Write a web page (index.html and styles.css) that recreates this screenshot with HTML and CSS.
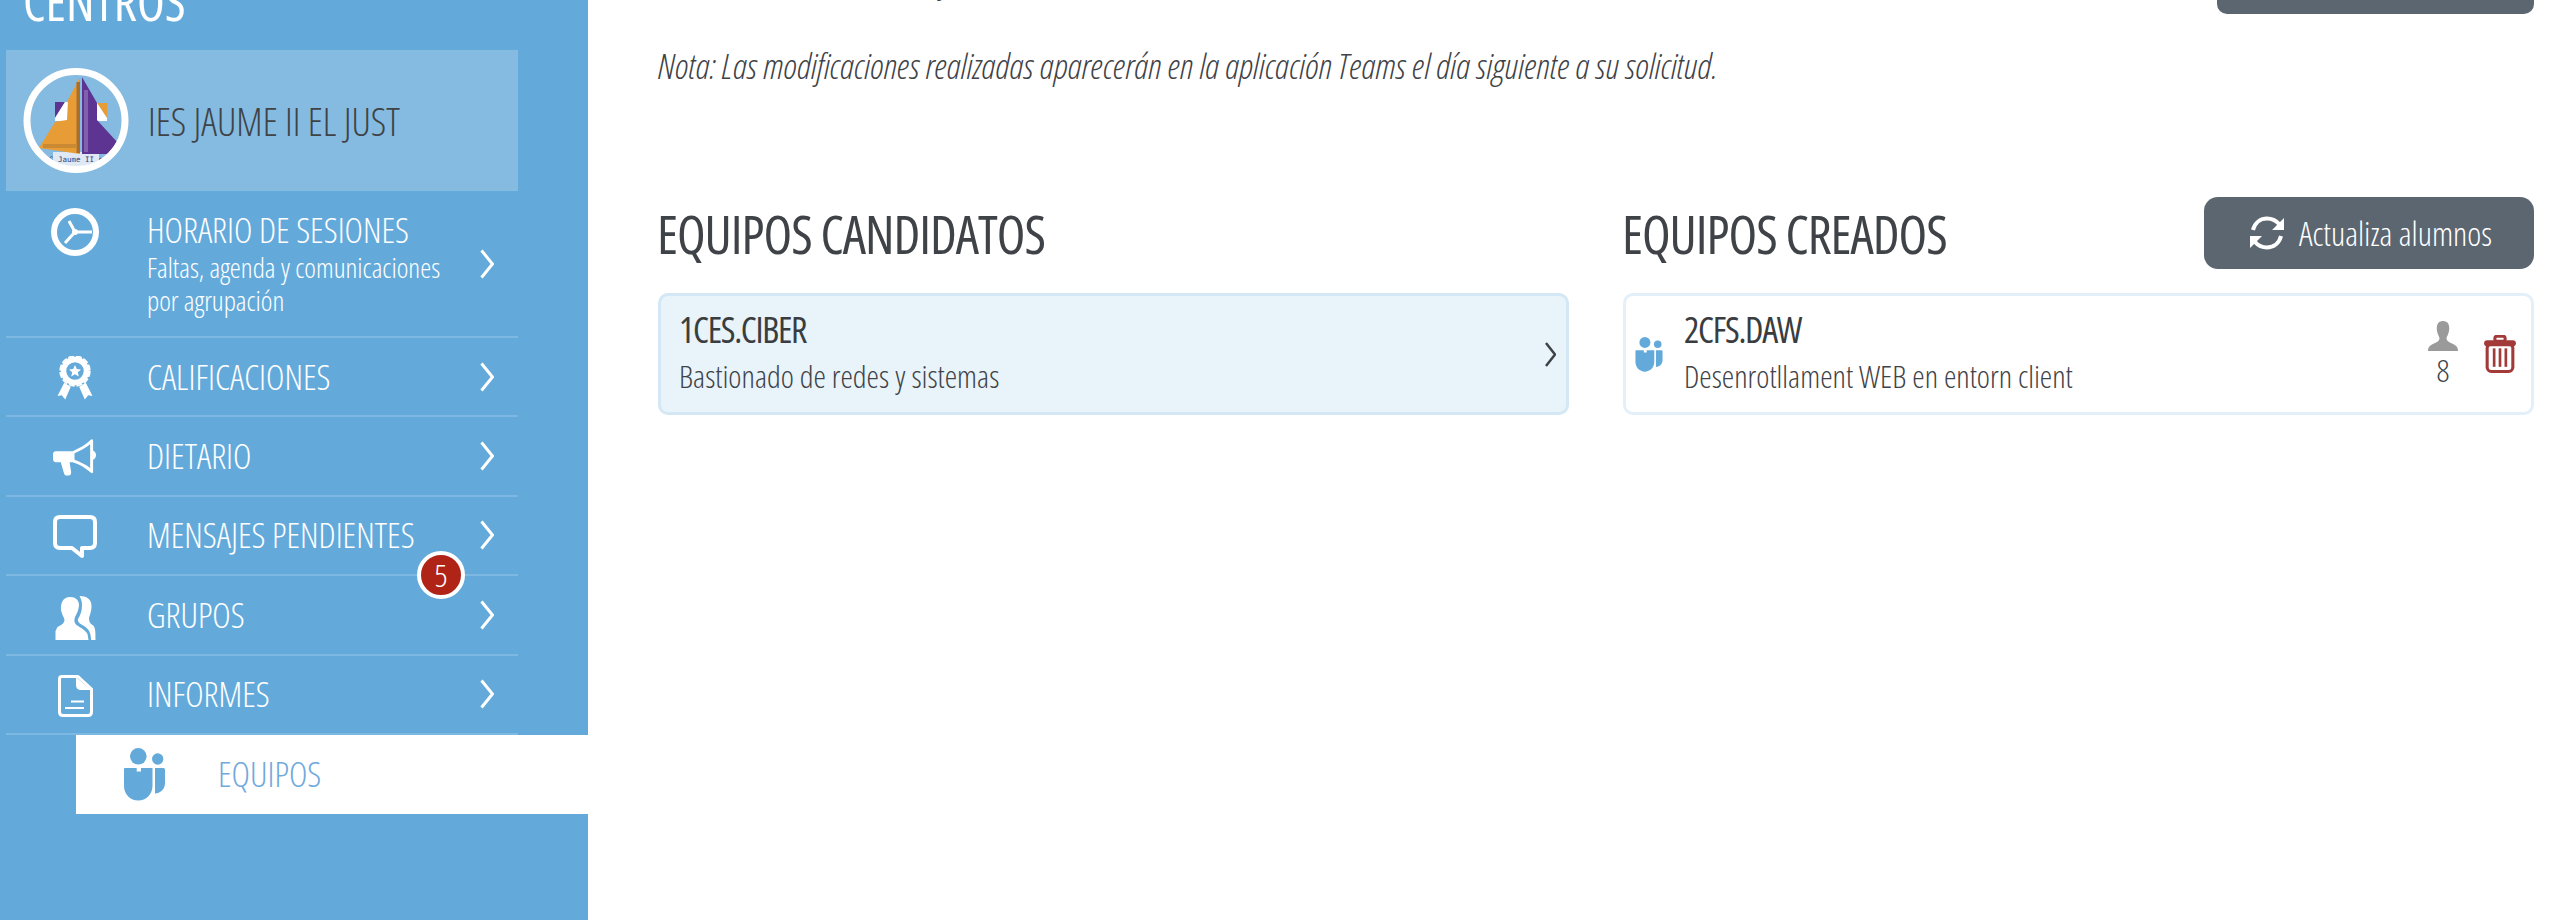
FILE: index.html
```html
<!DOCTYPE html>
<html lang="es">
<head>
<meta charset="utf-8">
<title>Equipos</title>
<link rel="stylesheet" href="styles.css">
</head>
<body>
<div class="page">
  <aside class="sidebar">
    <h2 class="side-title">CENTROS</h2>
    <div class="school">
      <svg class="logo" viewBox="0 0 106 106">
        <defs><clipPath id="lc"><circle cx="53" cy="52.500" r="46"/></clipPath></defs>
        <g clip-path="url(#lc)">
          <rect x="30" y="84" width="46" height="16" fill="#dfe9f5"/>
          <polygon points="32,34 42,34 32,50" fill="#5e3492"/>
          <polygon points="42,34 32,50 32,53 45,53 45,34" fill="#fff"/>
          <polygon points="74,35 84,35 84,50" fill="#e89c35"/>
          <polygon points="74,35 84,50 84,53 74,53" fill="#fff"/>
          <polygon points="57,9 57,86 16,80 32,54 37,53 44,52 45,32" fill="#e89c35"/>
          <rect x="53.500" y="14" width="3.500" height="71" fill="#a96f2c"/>
          <rect x="20" y="76" width="34" height="4" fill="#c98a33"/>
          <polygon points="59,9 59,86 95,86 95,75 74,52 74,35" fill="#5e3492"/>
          <rect x="61" y="22" width="4" height="62" fill="#8160ad"/>
          <text class="logo-text" x="53" y="94" text-anchor="middle">S Jaume II e</text>
        </g>
        <circle cx="53" cy="52.500" r="49" fill="none" stroke="#fff" stroke-width="7"/>
      </svg>
      <span class="school-name">IES JAUME II EL JUST</span>
    </div>
    <nav class="nav">
      <a class="nav-item nav-item-tall">
        <span class="nav-icon nav-icon-top">
          <svg width="48" height="48" viewBox="0 0 48 48"><circle cx="24" cy="24" r="21" fill="none" stroke="#fff" stroke-width="6"/><path d="M24 24 L41 24 M24 24 L18 13 M24 24 L14 35" fill="none" stroke="#fff" stroke-width="3"/><circle cx="24" cy="24" r="3" fill="#fff"/></svg>
        </span>
        <span class="nav-text">
          <span class="nav-label">HORARIO DE SESIONES</span>
          <span class="nav-sub">Faltas, agenda y comunicaciones<br>por agrupación</span>
        </span>
        <svg class="chev" viewBox="0 0 14 30"><path d="M1.500 1.500 L12.500 15 L1.500 28.500"/></svg>
      </a>
      <a class="nav-item">
        <span class="nav-icon">
          <svg width="36" height="44" viewBox="0 0 35 44"><path fill="#fff" d="M6.700 26.700 L0 40 L4.300 39.300 L7.700 43.500 L13.300 30.700 Z M28.300 26.700 L35 40 L30.700 39.300 L27.300 43.500 L21.700 30.700 Z"/><circle cx="17.500" cy="15" r="11.500" fill="none" stroke="#fff" stroke-width="5.500"/><circle cx="17.500" cy="15" r="14.800" fill="none" stroke="#fff" stroke-width="1.800" stroke-dasharray="6 1.800"/><polygon fill="#fff" points="17.500,9 19.300,13 23.500,13.400 20.300,16.200 21.300,20.500 17.500,18.200 13.700,20.500 14.700,16.200 11.500,13.400 15.700,13"/></svg>
        </span>
        <span class="nav-text"><span class="nav-label">CALIFICACIONES</span></span>
        <svg class="chev" viewBox="0 0 14 30"><path d="M1.500 1.500 L12.500 15 L1.500 28.500"/></svg>
      </a>
      <a class="nav-item">
        <span class="nav-icon">
          <svg width="44" height="37" viewBox="0 0 45 32" preserveAspectRatio="none"><path fill="#fff" fill-rule="evenodd" d="M3 10.500 L20 10.500 C27 8 34 5 39 0.500 Q41 -0.500 41 2 L41 10 C45 12 45 16 41 18 L41 28 Q41 30.500 38.500 29 C33 25 27 21.500 20 20 L17 20 L18.500 28 Q19 31.500 16 31.500 L13 31.500 Q11.500 31 11 29 L8 20 L3 20 Q0 20 0 17 L0 13 Q0 10.500 3 10.500 Z M22 12.300 L22 18 C27 19.500 33 22 38 25 L38 4.500 C33 8 27 10.500 22 12.300 Z"/></svg>
        </span>
        <span class="nav-text"><span class="nav-label">DIETARIO</span></span>
        <svg class="chev" viewBox="0 0 14 30"><path d="M1.500 1.500 L12.500 15 L1.500 28.500"/></svg>
      </a>
      <a class="nav-item">
        <span class="nav-icon">
          <svg width="44" height="44" viewBox="0 0 44 44"><path fill="none" stroke="#fff" stroke-width="4" stroke-linejoin="round" d="M7 2 L37 2 Q42 2 42 7 L42 28 Q42 33 37 33 L29 33 L29 41 L19 33 L7 33 Q2 33 2 28 L2 7 Q2 2 7 2 Z"/></svg>
        </span>
        <span class="nav-text"><span class="nav-label">MENSAJES PENDIENTES</span></span>
        <svg class="chev" viewBox="0 0 14 30"><path d="M1.500 1.500 L12.500 15 L1.500 28.500"/></svg>
        <span class="badge">5</span>
      </a>
      <a class="nav-item">
        <span class="nav-icon nav-icon-low">
          <svg width="41" height="44" viewBox="0 0 40 44"><path fill="#fff" d="M14.500 1 C7 1 5 8 5.500 14 C6 18 8.500 21 9 24 C9 27 6 29 2 31 L0 35 L0 44 L33 44 L32 38 C30 34 24 31 21 29 C18.500 27 18.500 24 19.500 21 C22 17 23.500 12 23.500 9 C23.500 4 20 1 14.500 1 Z"/><path fill="#fff" d="M24 0 C31 0 36 3 36 10 C36 15 34.500 18 33.500 22 C33.500 26 35 28 37 29 C40 31 40 35 40 44 L35.500 44 C35.500 38 34 34 30 31 C26 28 21.500 27 22.500 23 C25 19 26.500 15 26.500 9 C26.500 5 25.500 3 24 0 Z"/></svg>
        </span>
        <span class="nav-text"><span class="nav-label">GRUPOS</span></span>
        <svg class="chev" viewBox="0 0 14 30"><path d="M1.500 1.500 L12.500 15 L1.500 28.500"/></svg>
      </a>
      <a class="nav-item">
        <span class="nav-icon">
          <svg width="35" height="42" viewBox="0 0 35 42"><path fill="none" stroke="#fff" stroke-width="3" stroke-linejoin="round" d="M4 1.500 L20 1.500 L33.500 14 L33.500 37 Q33.500 40.500 30 40.500 L5 40.500 Q1.500 40.500 1.500 37 L1.500 4 Q1.500 1.500 4 1.500 Z"/><path fill="#fff" d="M18 2 L18 10 Q18 15 23 15 L33 15 Z M13 25.500 L26 25.500 L26 27.500 L13 27.500 Z M7 32 L26 32 L26 34 L7 34 Z"/></svg>
        </span>
        <span class="nav-text"><span class="nav-label">INFORMES</span></span>
        <svg class="chev" viewBox="0 0 14 30"><path d="M1.500 1.500 L12.500 15 L1.500 28.500"/></svg>
      </a>
      <a class="nav-active">
        <svg class="teams-icon" width="41" height="53" viewBox="0 0 41 53"><use href="#teams"/></svg>
        <span class="nav-label nav-label-active">EQUIPOS</span>
      </a>
    </nav>
  </aside>

  <main class="main">
    <div class="top-row">
      <span class="clipped-y">y</span>
      <div class="top-button"></div>
    </div>
    <p class="note">Nota: Las modificaciones realizadas aparecerán en la aplicación Teams el día siguiente a su solicitud.</p>
    <div class="columns">
      <section>
        <div class="col-head"><h2 class="col-title">EQUIPOS CANDIDATOS</h2></div>
        <div class="card card-candidate">
          <div class="card-text">
            <div class="card-title">1CES.CIBER</div>
            <div class="card-sub">Bastionado de redes y sistemas</div>
          </div>
          <svg class="card-chev" viewBox="0 0 11 25"><path d="M1 1 L10 12.500 L1 24"/></svg>
        </div>
      </section>
      <section>
        <div class="col-head">
          <h2 class="col-title">EQUIPOS CREADOS</h2>
          <button class="btn">
            <svg width="36" height="36" viewBox="0 0 36 36"><path fill="none" stroke="#fff" stroke-width="4" d="M4 15 C6 7 12 3.500 18 3.500 C23 3.500 27 5.500 30 9 M32 21 C30 29 24 32.500 18 32.500 C13 32.500 9 30.500 6 27"/><path fill="#fff" d="M35 3 L35 15 L23 15 Z M1 33 L1 21 L13 21 Z"/></svg>
            <span>Actualiza alumnos</span>
          </button>
        </div>
        <div class="card card-created">
          <svg class="card-teams" width="28" height="35" viewBox="0 0 41 53"><use href="#teams"/></svg>
          <div class="card-text">
            <div class="card-title">2CFS.DAW</div>
            <div class="card-sub">Desenrotllament WEB en entorn client</div>
          </div>
          <div class="card-count">
            <svg width="30" height="30" viewBox="0 0 30 30"><path fill="#9a9a9a" d="M15 0 C10 0 8 4 9 10 C9.500 13 11 15 11.500 17 C11.500 20 9 21 5 23 C2 24.500 0 26 0 30 L30 30 C30 26 28 24.500 25 23 C21 21 18.500 20 18.500 17 C19 15 20.500 13 21 10 C22 4 20 0 15 0 Z"/></svg>
            <span class="count-num">8</span>
          </div>
          <svg class="trash" width="32" height="38" viewBox="0 0 31 37"><rect class="trash-line" x="3" y="9" width="25" height="26.500" rx="4"/><rect class="trash-line" x="10.500" y="1.200" width="10" height="5"  rx="2"/><rect class="trash-fill" x="0" y="5" width="31" height="6" rx="3"/><rect class="trash-fill" x="8.500" y="13" width="2.600" height="18"/><rect class="trash-fill" x="14.200" y="13" width="2.600" height="18"/><rect class="trash-fill" x="19.900" y="13" width="2.600" height="18"/></svg>
        </div>
      </section>
    </div>
  </main>
</div>
<svg class="defs" width="0" height="0"><defs><g id="teams" fill="#63aadb"><circle cx="14.300" cy="8.300" r="8.300"/><circle cx="33.700" cy="11" r="5.700"/><path d="M0 21 Q0 20 1 20 L12.700 20 L12.700 23.500 L17 23.500 L17 20 L28.500 20 L28.500 38 C28.500 46.500 22 52.500 14.250 52.500 C6.500 52.500 0 46.500 0 38 Z"/><path d="M31 20 L39.500 20 Q41 20 41 21.500 L41 35 C41 41 37 45 31 45.500 Z"/></g></defs></svg>
</body>
</html>
```
FILE: styles.css
```css
* { box-sizing: border-box; }
html, body { margin: 0; height: 920px; overflow: hidden; background: #fff; }
body, button {
  font-family: "Open Sans", "Liberation Sans", sans-serif;
  font-stretch: 75%;
  font-weight: 300;
}
.defs { position: absolute; left: 0; top: 0; }
.page { display: flex; height: 920px; overflow: hidden; }

.sidebar {
  width: 588px; flex: none; height: 920px;
  background: #63aadb; padding-left: 6px;
  overflow: hidden;
}
.side-title {
  margin: -28px 0 0 17px; height: 78px;
  font-size: 51px; line-height: 58px; font-weight: 400; color: #fff;
}
.school {
  width: 512px; height: 141px; background: #85bbe1;
  display: flex; align-items: center; padding-left: 17px;
}
.logo { width: 106px; height: 106px; flex: none; }
.logo-text { font-family: "DejaVu Sans Mono", monospace; font-size: 7.500px; fill: #3a3a70; font-stretch: normal; font-weight: 400; }
.school-name { margin-left: 19px; font-size: 38.800px; color: #3f4347; }

.nav { display: flex; flex-direction: column; }
.nav-item {
  position: relative; width: 512px; height: 79.400px;
  display: flex; align-items: center; color: #fff;
  border-bottom: 2px solid #7db8e3;
}
.nav-item-tall { height: 147px; }
.nav-item-tall .nav-text { padding-bottom: 2px; }
.nav-icon { width: 138px; margin-right: 3px; padding-top: 3px; flex: none; display: flex; justify-content: center; }
.nav-icon-top { align-self: flex-start; padding-top: 17px; }
.nav-icon-low { padding-top: 6px; }
.nav-text { flex: 1; display: flex; flex-direction: column; }
.nav-label { font-size: 35px; line-height: 42px; }
.nav-sub { font-size: 27.800px; line-height: 33px; }
.chev { width: 14px; height: 30px; margin-right: 24px; flex: none; }
.chev path { fill: none; stroke: #fff; stroke-width: 3; }
.badge {
  position: absolute; left: 411px; top: 54px;
  width: 48px; height: 48px; border-radius: 50%;
  border: 4px solid #fff; background: #b02418; color: #fff;
  display: flex; align-items: center; justify-content: center;
  font-size: 32px;
}
.nav-active {
  margin: 0 0 0 70px; height: 79px; width: 512px;
  background: #fff; display: flex; align-items: center;
}
.teams-icon { margin-left: 48px; }
.nav-label-active { margin-left: 53px; color: #70a9dd; }

.main { flex: 1; padding: 0 31px 0 70px; color: #3f4347; min-width: 0; }
.top-row { height: 14px; position: relative; }
.clipped-y {
  position: absolute; left: 283px; top: -40px;
  font-size: 35px; line-height: 40px; font-style: italic;
}
.top-button {
  position: absolute; right: 0; top: -30px; width: 317px; height: 44px;
  background: #5c6670; border-radius: 10px;
}
.note { margin: 29px 0 0; font-size: 35.500px; line-height: 44px; font-style: italic; }
.columns { display: grid; grid-template-columns: 1fr 1fr; gap: 54px; margin-top: 110px; }
.col-head { height: 72px; margin-bottom: 24px; display: flex; align-items: center; justify-content: space-between; }
.col-title { margin: 0 0 0 -1px; font-size: 52.500px; font-weight: 380; letter-spacing: -1px; color: #3f4347; }
.btn {
  width: 330px; height: 72px; border: 0; border-radius: 14px; padding: 0 0 0 3px;
  background: #5c6670; color: #fff; font-size: 33.400px;
  display: flex; align-items: center; justify-content: center; gap: 14px;
}
.card {
  height: 122px; border-radius: 10px; border: 3px solid #d3e7f5;
  display: flex; align-items: center;
}
.card-candidate { background: #e8f3fa; padding: 0 10px 0 18px; }
.card-created { background: #fff; border-color: #e3f0f9; padding: 0 15px 0 9px; }
.card-text { flex: 1; padding-bottom: 5px; }
.card-title { font-size: 36px; line-height: 46px; font-weight: 400; letter-spacing: -1.300px; color: #3a3d40; }
.card-sub { font-size: 31.400px; line-height: 40px; margin-top: 3px; }
.card-chev { width: 11px; height: 25px; flex: none; }
.card-chev path { fill: none; stroke: #3f4347; stroke-width: 2.500; }
.card-teams { margin-right: 21px; flex: none; }
.card-count { display: flex; flex-direction: column; align-items: center; margin-right: 26px; }
.count-num { font-size: 32px; line-height: 36px; margin-top: 1px; }
.trash { flex: none; }
.trash-line { fill: none; stroke: #a33a3a; stroke-width: 3; }
.trash-fill { fill: #a33a3a; }
```
